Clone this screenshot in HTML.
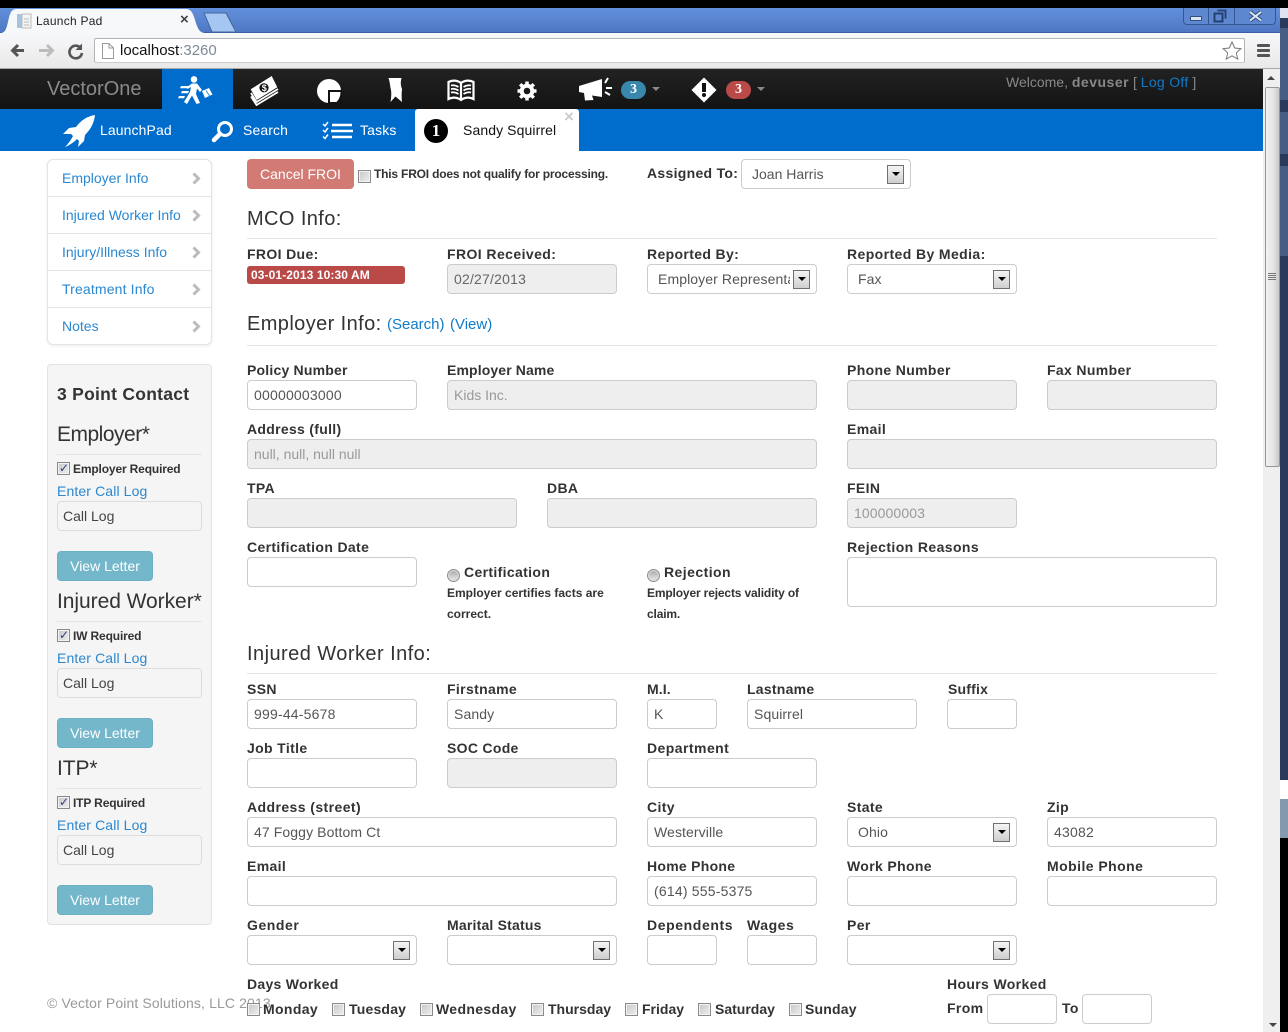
<!DOCTYPE html>
<html><head><meta charset="utf-8"><title>Launch Pad</title>
<style>
*{box-sizing:border-box}
html,body{margin:0;padding:0;width:1288px;height:1032px;overflow:hidden;background:#fff;font-family:"Liberation Sans",Arial,sans-serif;font-size:14px;color:#333}
.a{position:absolute}
.t{position:absolute;white-space:nowrap;line-height:20px;height:20px}
.l{position:absolute;white-space:nowrap;line-height:20px;height:20px;font-weight:bold;font-size:14px;letter-spacing:.35px;color:#333}
.i{position:absolute;height:30px;border:1px solid #ccc;border-radius:4px;background:#fff;line-height:28px;padding-left:6px;color:#555;font-size:14px;letter-spacing:.1px;white-space:nowrap;overflow:hidden}
.n{letter-spacing:.2px}
.d{background:#eee;color:#999}
.h{position:absolute;font-size:20px;line-height:24px;height:24px;color:#333;white-space:nowrap;letter-spacing:.4px}
.hr{position:absolute;height:1px;background:#e5e5e5}
.s{padding-left:10px}
.s b{position:absolute;right:6px;top:5px;width:17px;height:19px;border:1px solid #707070;background:linear-gradient(#f4f4f4,#cfcfcf)}
.s b:after{content:"";position:absolute;left:4px;top:6px;border:4px solid transparent;border-top:4px solid #000;border-bottom:0}
.c{position:absolute;width:13px;height:13px;border:1px solid #8a8a8a;background:linear-gradient(135deg,#c6c6c6,#f0f0f0);box-shadow:inset 0 0 0 1px #f2f2f2}
.r{position:absolute;width:13px;height:13px;border:1px solid #8e8f8f;border-radius:50%;background:linear-gradient(#a6a6a6,#ececec);box-shadow:inset 0 0 0 1px #ddd}
a,.lk{color:#0f7bc8;text-decoration:none}
.m{position:absolute;left:48px;width:163px;height:37px;border-bottom:1px solid #e5e5e5;line-height:36px;font-size:14px;color:#2a87d0;white-space:nowrap}
.m span{position:absolute;left:14px}
.m svg{position:absolute;left:144px;top:12px}
.vb{position:absolute;left:57px;width:96px;height:30px;background:#74b7cb;border:1px solid #6eb0c4;border-radius:4px;color:#fff;text-align:center;line-height:28px;font-size:14px}
.cl{position:absolute;left:57px;width:145px;height:30px;border:1px solid #ddd;border-radius:4px;background:#f5f5f5;line-height:28px;padding-left:5px;color:#444;font-size:14px}
.dd{position:absolute;width:0;height:0;border:4px solid transparent;border-top:4px solid #888;border-bottom:0}
.cr{font-size:12px;font-weight:bold;color:#333;letter-spacing:-.15px}
</style></head><body>
<!-- window chrome -->
<div class="a" style="left:0;top:0;width:1288px;height:8px;background:#000"></div>
<div class="a" style="left:1280px;top:8px;width:8px;height:10px;background:#dfe3f0"></div>
<div class="a" style="left:1280px;top:18px;width:8px;height:762px;background:#2a3a5c"></div>
<div class="a" style="left:1280px;top:28px;width:8px;height:72px;background:#475d82"></div>
<div class="a" style="left:1280px;top:112px;width:8px;height:42px;background:#475d82"></div>
<div class="a" style="left:1280px;top:166px;width:8px;height:90px;background:#475d82"></div>
<div class="a" style="left:1280px;top:799px;width:8px;height:39px;background:#8499ae"></div>
<div class="a" style="left:1280px;top:838px;width:8px;height:194px;background:#000"></div>
<div class="t" style="left:1284px;top:778px;color:#fff;font-size:12px">F</div>
<div class="a" style="left:0;top:8px;width:1280px;height:25px;background:linear-gradient(#628fdc,#4e78c4);border-bottom:1px solid #3a5fa5"></div>
<div class="a" style="left:0;top:33px;width:1280px;height:36px;background:linear-gradient(#f7f8fa,#e9e9e9);border-bottom:1px solid #a8a8a8"></div>
<!-- tab -->
<svg class="a" style="left:0;top:8px" width="240" height="26"><path d="M0 25C5 25 6 22 8 14 10 5 11 1 17 1H186C191 1 193 5 195 12 198 22 200 25 206 25V26H0Z" fill="#f7f8fa"/><path d="M204 5H226L236 24H212Z" fill="#a4c6f0" stroke="#43689f"/></svg>
<svg class="a" style="left:16px;top:13px" width="16" height="16"><rect x="1" y="1" width="5" height="14" fill="#a7c4de"/><rect x="6" y="1" width="9" height="14" fill="#f4f4f4" stroke="#bbb"/><path d="M8 6h5M8 9h5M8 12h5" stroke="#bbb"/></svg>
<div class="t" style="left:36px;top:11px;font-size:12px;color:#222;letter-spacing:.25px">Launch Pad</div>
<div class="t" style="left:180px;top:10px;font-size:15px;font-weight:bold;color:#444">×</div>
<!-- window buttons -->
<div class="a" style="left:1183px;top:8px;width:93px;height:17px;background:#5d88d0;border:1px solid #35578f;border-top:0;border-radius:0 0 4px 4px"></div>
<div class="a" style="left:1208px;top:8px;width:1px;height:16px;background:#35578f"></div>
<div class="a" style="left:1234px;top:8px;width:1px;height:16px;background:#35578f"></div>
<div class="a" style="left:1190px;top:16px;width:12px;height:5px;background:#dbe6f5;border:1px solid #33507f;border-radius:1px"></div>
<svg class="a" style="left:1213px;top:9px" width="16" height="15" fill="none" stroke="#24406f"><rect x="1.500" y="4.500" width="8" height="8" stroke-width="2"/><path d="M4.500 1.500h8v8" stroke-width="1.800"/></svg>
<svg class="a" style="left:1247px;top:9px" width="17" height="14" fill="none"><path d="M3 3l11 8.500M14 3l-11 8.500" stroke="#33507f" stroke-width="4"/><path d="M3 3l11 8.500M14 3l-11 8.500" stroke="#dce8f8" stroke-width="2"/></svg>
<!-- toolbar -->
<svg class="a" style="left:9px;top:42px" width="76" height="18"><path d="M15 8.500H4M9 3L3.500 8.500 9 14" fill="none" stroke="#555" stroke-width="3"/><path d="M30 8.500H43M38 3l5.500 5.500L38 14" fill="none" stroke="#bcbcbc" stroke-width="3"/><path d="M72 6.500A6.300 6.300 0 1 0 73 11" fill="none" stroke="#555" stroke-width="2.600"/><path d="M73 1.500V8H66.500Z" fill="#555"/></svg>
<div class="a" style="left:94px;top:38px;width:1151px;height:25px;background:#fff;border:1px solid #b4b4b4;border-bottom-color:#ccc;border-radius:2px"></div>
<svg class="a" style="left:101px;top:43px" width="14" height="16"><path d="M1.500.5H8L12.500 5V15.500H1.500Z M8 .5V5H12.500" fill="#fff" stroke="#999"/></svg>
<div class="t" style="left:120px;top:41px;font-size:15px;color:#111">localhost<span style="color:#7e8a96">:3260</span></div>
<svg class="a" style="left:1222px;top:41px" width="20" height="19"><path d="M10 1l2.700 6 6.300.6-4.700 4.200 1.400 6.200L10 14.800 4.300 18l1.400-6.200L1 7.600 7.300 7Z" fill="#fff" stroke="#777"/></svg>
<div class="a" style="left:1257px;top:44px;width:13px;height:3px;background:#555;box-shadow:0 5px 0 #555,0 10px 0 #555;border-radius:1px"></div>
<!-- navbar -->
<div class="a" style="left:0;top:69px;width:1263px;height:40px;background:linear-gradient(#222,#131313)"></div>
<div class="t" style="left:47px;top:78px;font-size:20px;color:#8a8a8a;line-height:22px;height:22px">VectorOne</div>
<div class="a" style="left:162px;top:69px;width:71px;height:40px;background:#006dcc"></div>
<svg class="a" style="left:178px;top:76px" width="36" height="29" fill="#fff"><circle cx="16" cy="3.400" r="3.300"/><path d="M14 7.500L19 7.500 24 14 22 16 19 12.500 18 18 22 27 18.500 28 14 19.500 9 28 6 26 12 16 13 11 9.500 13 9 11Z"/><path d="M3 10h9l-1 2.200H2zM4 15h7l-1 2.200H3zM1 20h6l-1 2.200H0z"/><path d="M24 15L31 12 34.500 18.500 27 22Z"/><path d="M28 14.500l4 6" stroke="#006dcc" stroke-width=".7"/></svg>
<svg class="a" style="left:250px;top:75px" width="30" height="31"><path d="M1 18L6.500 27 28 14M1 21.500L6.500 30 28 17" stroke="#fff" stroke-width="1.800" fill="none"/><path d="M0.700 14.300L21.700 1 27.300 12.300 6.700 25Z" fill="#fff"/><circle cx="14" cy="12.800" r="4.600" fill="#111"/><text x="11.700" y="16" font-size="9" font-weight="bold" fill="#fff" font-family="Liberation Sans">$</text></svg>
<svg class="a" style="left:316px;top:78px" width="26" height="26"><circle cx="13" cy="13" r="12" fill="#fff"/><rect x="12" y="12" width="14" height="14" fill="#131313"/><path d="M14 14H24.500Q24.500 20 20.500 24H14Z" fill="#fff"/></svg>
<svg class="a" style="left:386px;top:76px" width="18" height="27"><path d="M2.500 2H15.500C14.500 6 14.500 9 16 13 15.500 18 15.500 22 16 26L9.500 20.500 4.500 26C5.500 20 5.500 15 4.500 12 4 8 3.500 5 2.500 2Z" fill="#fff"/></svg>
<svg class="a" style="left:447px;top:79px" width="28" height="24" fill="none" stroke="#fff"><path d="M14 4C10 1 5 1 1.500 3V20C5 18 10 18 14 21 18 18 23 18 26.500 20V3C23 1 18 1 14 4ZM14 4V21" stroke-width="2.200"/><path d="M4 6.500C6 6 9 6.500 11.500 8M4 10C6 9.500 9 10 11.500 11.500M4 13.500C6 13 9 13.500 11.500 15M24 6.500C22 6 19 6.500 16.500 8M24 10C22 9.500 19 10 16.500 11.500M24 13.500C22 13 19 13.500 16.500 15" stroke-width="1.700"/></svg>
<svg class="a" style="left:517px;top:81px" width="20" height="20"><circle cx="10" cy="10" r="5.300" fill="none" stroke="#fff" stroke-width="4"/><path d="M10 .5V4M10 16V19.500M.5 10H4M16 10H19.500M3.200 3.200L5.700 5.700M14.300 14.300L16.800 16.800M16.800 3.200L14.300 5.700M5.700 14.300L3.200 16.800" stroke="#fff" stroke-width="3.500"/></svg>
<svg class="a" style="left:578px;top:77px" width="36" height="26"><path d="M1 9L24 2V20L14 18.500 15.500 23 7 23.500 6 16 1 15Z" fill="#fff"/><path d="M27 6l3-5M28 11h6M27 15l5 3" stroke="#fff" stroke-width="2"/></svg>
<div class="a" style="left:621px;top:81px;width:25px;height:18px;border-radius:9px;background:#3a87ad;color:#fff;font:bold 14px/18px 'Liberation Serif',serif;text-align:center">3</div>
<div class="dd" style="left:652px;top:87px"></div>
<svg class="a" style="left:691px;top:77px" width="26" height="26"><path d="M13 .5L25.500 13 13 25.500 .5 13Z" fill="#fff"/><rect x="11" y="6" width="4" height="9" fill="#111"/><circle cx="13" cy="18" r="2" fill="#111"/></svg>
<div class="a" style="left:726px;top:81px;width:25px;height:18px;border-radius:9px;background:#b94a48;color:#fff;font:bold 14px/18px 'Liberation Serif',serif;text-align:center">3</div>
<div class="dd" style="left:757px;top:87px"></div>
<div class="t" style="left:1006px;top:72px;color:#888;font-size:14px">Welcome, <b style="letter-spacing:.5px">devuser</b> [ <span style="color:#0f7bc8;letter-spacing:.3px">Log Off</span> ]</div>
<!-- subnav -->
<div class="a" style="left:0;top:109px;width:1263px;height:42px;background:#006dcc"></div>
<svg class="a" style="left:62px;top:114px" width="36" height="34" fill="#fff"><path d="M33 1C26 2 19 6 14 13L7 14 1 20 9 20 11 22C9 26 6 30 3 33 8 31 12 28 15 25L17 27 16 33 22 27 23 21C29 15 32 9 33 1Z"/></svg>
<div class="t" style="left:100px;top:120px;color:#fff;font-size:14px;letter-spacing:.1px">LaunchPad</div>
<svg class="a" style="left:210px;top:120px" width="24" height="24" fill="none" stroke="#fff"><circle cx="15" cy="9" r="6.500" stroke-width="3"/><path d="M10 14L4 20" stroke-width="4.500" stroke-linecap="round"/></svg>
<div class="t" style="left:243px;top:120px;color:#fff;font-size:14px;letter-spacing:.1px">Search</div>
<svg class="a" style="left:322px;top:121px" width="32" height="20" fill="none" stroke="#fff"><path d="M1 3l2 2 3-4M1 9l2 2 3-4M1 15.500l2 2 3-4" stroke-width="1.500"/><path d="M10 4H30M9 10H31M10 16H30" stroke-width="2.500"/></svg>
<div class="t" style="left:360px;top:120px;color:#fff;font-size:14px;letter-spacing:.15px">Tasks</div>
<div class="a" style="left:415px;top:109px;width:164px;height:42px;background:#fff;border-radius:3px 3px 0 0"></div>
<div class="a" style="left:424px;top:119px;width:24px;height:24px;border-radius:50%;background:#000;color:#fff;font:bold 17px/24px 'Liberation Serif',serif;text-align:center">1</div>
<div class="t" style="left:463px;top:120px;color:#111;font-size:14px;letter-spacing:.1px">Sandy Squirrel</div>
<div class="t" style="left:564px;top:107px;font-size:17px;font-weight:bold;color:#ccc">×</div>
<!-- scrollbar -->
<div class="a" style="left:1263px;top:69px;width:17px;height:963px;background:#efefef"></div>
<div class="a" style="left:1265px;top:76px;border:4px solid transparent;border-bottom:4px solid #444;border-top:0;width:0;height:0;margin-left:2px"></div>
<div class="a" style="left:1265px;top:87px;width:15px;height:380px;background:linear-gradient(90deg,#f2f2f2,#e6e6e6 55%,#c8c8c8);border:1px solid #979797;border-radius:2px"></div>
<div class="a" style="left:1268px;top:273px;width:8px;height:1px;background:#777;box-shadow:0 2px 0 #777,0 4px 0 #777,0 6px 0 #777"></div>
<div class="a" style="left:1269px;top:1023px;border:4px solid transparent;border-top:4px solid #444;border-bottom:0;width:0;height:0"></div>
<!-- left menu -->
<div class="a" style="left:47px;top:159px;width:165px;height:186px;border:1px solid #e3e3e3;border-radius:6px;box-shadow:0 1px 3px rgba(0,0,0,.08)"></div>
<div class="m" style="top:160px"><span>Employer Info</span><svg width="9" height="13"><path d="M1.500 1.500L6.500 6.500 1.500 11.500" fill="none" stroke="#bbb" stroke-width="3"/></svg></div>
<div class="m" style="top:197px"><span>Injured Worker Info</span><svg width="9" height="13"><path d="M1.500 1.500L6.500 6.500 1.500 11.500" fill="none" stroke="#bbb" stroke-width="3"/></svg></div>
<div class="m" style="top:234px"><span>Injury/Illness Info</span><svg width="9" height="13"><path d="M1.500 1.500L6.500 6.500 1.500 11.500" fill="none" stroke="#bbb" stroke-width="3"/></svg></div>
<div class="m" style="top:271px"><span style="letter-spacing:.15px">Treatment Info</span><svg width="9" height="13"><path d="M1.500 1.500L6.500 6.500 1.500 11.500" fill="none" stroke="#bbb" stroke-width="3"/></svg></div>
<div class="m" style="top:308px;border:0"><span>Notes</span><svg width="9" height="13"><path d="M1.500 1.500L6.500 6.500 1.500 11.500" fill="none" stroke="#bbb" stroke-width="3"/></svg></div>
<!-- 3 point -->
<div class="a" style="left:47px;top:364px;width:165px;height:561px;background:#f5f5f5;border:1px solid #e3e3e3;border-radius:4px"></div>
<div class="t" style="left:57px;top:384px;font-size:17.500px;font-weight:bold;color:#333;letter-spacing:.27px">3 Point Contact</div>
<div class="h" style="left:57px;top:423px;font-size:21px;letter-spacing:-.5px">Employer*</div>
<div class="hr" style="left:57px;top:454px;width:145px"></div>
<div class="c" style="left:57px;top:462px;color:#2b3f8c;font:bold 12px/11px 'DejaVu Sans',sans-serif;padding-left:1px">✓</div>
<div class="t cr" style="left:73px;top:459px">Employer Required</div>
<div class="t lk" style="left:57px;top:481px;color:#2a87d0;letter-spacing:.12px">Enter Call Log</div>
<div class="cl" style="top:501px">Call Log</div>
<div class="vb" style="top:551px">View Letter</div>
<div class="h" style="left:57px;top:590px;font-size:21px;letter-spacing:-.05px">Injured Worker*</div>
<div class="hr" style="left:57px;top:621px;width:145px"></div>
<div class="c" style="left:57px;top:629px;color:#2b3f8c;font:bold 12px/11px 'DejaVu Sans',sans-serif;padding-left:1px">✓</div>
<div class="t cr" style="left:73px;top:626px">IW Required</div>
<div class="t lk" style="left:57px;top:648px;color:#2a87d0;letter-spacing:.12px">Enter Call Log</div>
<div class="cl" style="top:668px">Call Log</div>
<div class="vb" style="top:718px">View Letter</div>
<div class="h" style="left:57px;top:757px;font-size:21px;letter-spacing:-.1px">ITP*</div>
<div class="hr" style="left:57px;top:788px;width:145px"></div>
<div class="c" style="left:57px;top:796px;color:#2b3f8c;font:bold 12px/11px 'DejaVu Sans',sans-serif;padding-left:1px">✓</div>
<div class="t cr" style="left:73px;top:793px">ITP Required</div>
<div class="t lk" style="left:57px;top:815px;color:#2a87d0;letter-spacing:.12px">Enter Call Log</div>
<div class="cl" style="top:835px">Call Log</div>
<div class="vb" style="top:885px">View Letter</div>
<div class="t" style="left:47px;top:993px;color:#999;font-size:14px;letter-spacing:.12px">© Vector Point Solutions, LLC 2013</div>
<!-- top row -->
<div class="a" style="left:247px;top:159px;width:107px;height:30px;background:#d27b75;border-radius:4px;color:#fff;text-align:center;line-height:31px;font-size:14px">Cancel FROI</div>
<div class="c" style="left:358px;top:170px"></div>
<div class="t" style="left:374px;top:164px;font-size:12px;font-weight:bold;color:#333;letter-spacing:-.19px">This FROI does not qualify for processing.</div>
<div class="l" style="left:647px;top:163px;letter-spacing:.3px">Assigned To:</div>
<div class="i s" style="left:741px;top:159px;width:170px;letter-spacing:0">Joan Harris<b></b></div>
<div class="h" style="left:247px;top:207px">MCO Info:</div>
<div class="hr" style="left:247px;top:238px;width:970px"></div>
<div class="l" style="left:247px;top:244px">FROI Due:</div>
<div class="a" style="left:247px;top:266px;width:158px;height:18px;background:#b94a48;border-radius:3px;color:#fff;font:bold 12px/18px 'Liberation Sans',sans-serif;padding-left:4px;letter-spacing:.1px">03-01-2013 10:30 AM</div>
<div class="l" style="left:447px;top:244px;letter-spacing:.42px">FROI Received:</div>
<div class="i d n" style="left:447px;top:264px;width:170px;color:#666">02/27/2013</div>
<div class="l" style="left:647px;top:244px">Reported By:</div>
<div class="i s" style="left:647px;top:264px;width:170px"><span style="display:inline-block;width:132px;overflow:hidden;vertical-align:top">Employer Representative</span><b></b></div>
<div class="l" style="left:847px;top:244px;letter-spacing:.4px">Reported By Media:</div>
<div class="i s" style="left:847px;top:264px;width:170px">Fax<b></b></div>
<div class="h" style="left:247px;top:312px">Employer Info:</div>
<div class="t lk" style="left:387px;top:315px;font-size:15px">(Search)</div>
<div class="t lk" style="left:450px;top:315px;font-size:15px">(View)</div>
<div class="hr" style="left:247px;top:345px;width:970px"></div>
<div class="l" style="left:247px;top:360px;letter-spacing:.2px">Policy Number</div>
<div class="i n" style="left:247px;top:380px;width:170px">00000003000</div>
<div class="l" style="left:447px;top:360px;letter-spacing:.12px">Employer Name</div>
<div class="i d" style="left:447px;top:380px;width:370px;letter-spacing:0">Kids Inc.</div>
<div class="l" style="left:847px;top:360px">Phone Number</div>
<div class="i d" style="left:847px;top:380px;width:170px"></div>
<div class="l" style="left:1047px;top:360px">Fax Number</div>
<div class="i d" style="left:1047px;top:380px;width:170px"></div>
<div class="l" style="left:247px;top:419px;letter-spacing:.3px">Address (full)</div>
<div class="i d" style="left:247px;top:439px;width:570px;letter-spacing:0">null, null, null null</div>
<div class="l" style="left:847px;top:419px">Email</div>
<div class="i d" style="left:847px;top:439px;width:370px"></div>
<div class="l" style="left:247px;top:478px">TPA</div>
<div class="i d" style="left:247px;top:498px;width:270px"></div>
<div class="l" style="left:547px;top:478px">DBA</div>
<div class="i d" style="left:547px;top:498px;width:270px"></div>
<div class="l" style="left:847px;top:478px">FEIN</div>
<div class="i d" style="left:847px;top:498px;width:170px">100000003</div>
<div class="l" style="left:247px;top:537px">Certification Date</div>
<div class="i" style="left:247px;top:557px;width:170px"></div>
<div class="r" style="left:447px;top:569px"></div>
<div class="l" style="left:464px;top:562px">Certification</div>
<div class="t" style="left:447px;top:583px;font-size:12px;font-weight:bold;line-height:21px;height:42px;color:#333">Employer certifies facts are<br>correct.</div>
<div class="r" style="left:647px;top:569px"></div>
<div class="l" style="left:664px;top:562px;letter-spacing:.45px">Rejection</div>
<div class="t" style="left:647px;top:583px;font-size:12px;font-weight:bold;line-height:21px;height:42px;color:#333;letter-spacing:-.15px">Employer rejects validity of<br>claim.</div>
<div class="l" style="left:847px;top:537px;letter-spacing:.4px">Rejection Reasons</div>
<div class="i" style="left:847px;top:557px;width:370px;height:50px"></div>
<div class="h" style="left:247px;top:642px;letter-spacing:.45px">Injured Worker Info:</div>
<div class="hr" style="left:247px;top:673px;width:970px"></div>
<div class="l" style="left:247px;top:679px">SSN</div>
<div class="i n" style="left:247px;top:699px;width:170px">999-44-5678</div>
<div class="l" style="left:447px;top:679px">Firstname</div>
<div class="i" style="left:447px;top:699px;width:170px">Sandy</div>
<div class="l" style="left:647px;top:679px;letter-spacing:.1px">M.I.</div>
<div class="i" style="left:647px;top:699px;width:70px">K</div>
<div class="l" style="left:747px;top:679px;letter-spacing:.25px">Lastname</div>
<div class="i" style="left:747px;top:699px;width:170px">Squirrel</div>
<div class="l" style="left:948px;top:679px;letter-spacing:.2px">Suffix</div>
<div class="i" style="left:947px;top:699px;width:70px"></div>
<div class="l" style="left:247px;top:738px">Job Title</div>
<div class="i" style="left:247px;top:758px;width:170px"></div>
<div class="l" style="left:447px;top:738px;letter-spacing:.3px">SOC Code</div>
<div class="i d" style="left:447px;top:758px;width:170px"></div>
<div class="l" style="left:647px;top:738px;letter-spacing:.45px">Department</div>
<div class="i" style="left:647px;top:758px;width:170px"></div>
<div class="l" style="left:247px;top:797px;letter-spacing:.42px">Address (street)</div>
<div class="i" style="left:247px;top:817px;width:370px">47 Foggy Bottom Ct</div>
<div class="l" style="left:647px;top:797px">City</div>
<div class="i" style="left:647px;top:817px;width:170px">Westerville</div>
<div class="l" style="left:847px;top:797px">State</div>
<div class="i s" style="left:847px;top:817px;width:170px">Ohio<b></b></div>
<div class="l" style="left:1047px;top:797px">Zip</div>
<div class="i n" style="left:1047px;top:817px;width:170px">43082</div>
<div class="l" style="left:247px;top:856px">Email</div>
<div class="i" style="left:247px;top:876px;width:370px"></div>
<div class="l" style="left:647px;top:856px;letter-spacing:.27px">Home Phone</div>
<div class="i n" style="left:647px;top:876px;width:170px">(614) 555-5375</div>
<div class="l" style="left:847px;top:856px">Work Phone</div>
<div class="i" style="left:847px;top:876px;width:170px"></div>
<div class="l" style="left:1047px;top:856px;letter-spacing:.45px">Mobile Phone</div>
<div class="i" style="left:1047px;top:876px;width:170px"></div>
<div class="l" style="left:247px;top:915px;letter-spacing:.55px">Gender</div>
<div class="i s" style="left:247px;top:935px;width:170px"><b></b></div>
<div class="l" style="left:447px;top:915px;letter-spacing:.2px">Marital Status</div>
<div class="i s" style="left:447px;top:935px;width:170px"><b></b></div>
<div class="l" style="left:647px;top:915px;letter-spacing:.6px">Dependents</div>
<div class="i" style="left:647px;top:935px;width:70px"></div>
<div class="l" style="left:747px;top:915px;letter-spacing:.55px">Wages</div>
<div class="i" style="left:747px;top:935px;width:70px"></div>
<div class="l" style="left:847px;top:915px">Per</div>
<div class="i s" style="left:847px;top:935px;width:170px"><b></b></div>
<div class="l" style="left:247px;top:974px;letter-spacing:.28px">Days Worked</div>
<div class="c" style="left:247px;top:1003px"></div><div class="l" style="left:263px;top:999px">Monday</div>
<div class="c" style="left:332px;top:1003px"></div><div class="l" style="left:349px;top:999px;letter-spacing:.2px">Tuesday</div>
<div class="c" style="left:420px;top:1003px"></div><div class="l" style="left:436px;top:999px">Wednesday</div>
<div class="c" style="left:531px;top:1003px"></div><div class="l" style="left:548px;top:999px;letter-spacing:0">Thursday</div>
<div class="c" style="left:625px;top:1003px"></div><div class="l" style="left:642px;top:999px;letter-spacing:0">Friday</div>
<div class="c" style="left:698px;top:1003px"></div><div class="l" style="left:715px;top:999px;letter-spacing:0">Saturday</div>
<div class="c" style="left:789px;top:1003px"></div><div class="l" style="left:805px;top:999px;letter-spacing:.2px">Sunday</div>
<div class="l" style="left:947px;top:974px">Hours Worked</div>
<div class="l" style="left:947px;top:998px">From</div>
<div class="i" style="left:987px;top:994px;width:70px"></div>
<div class="l" style="left:1062px;top:998px">To</div>
<div class="i" style="left:1082px;top:994px;width:70px"></div>
</body></html>
